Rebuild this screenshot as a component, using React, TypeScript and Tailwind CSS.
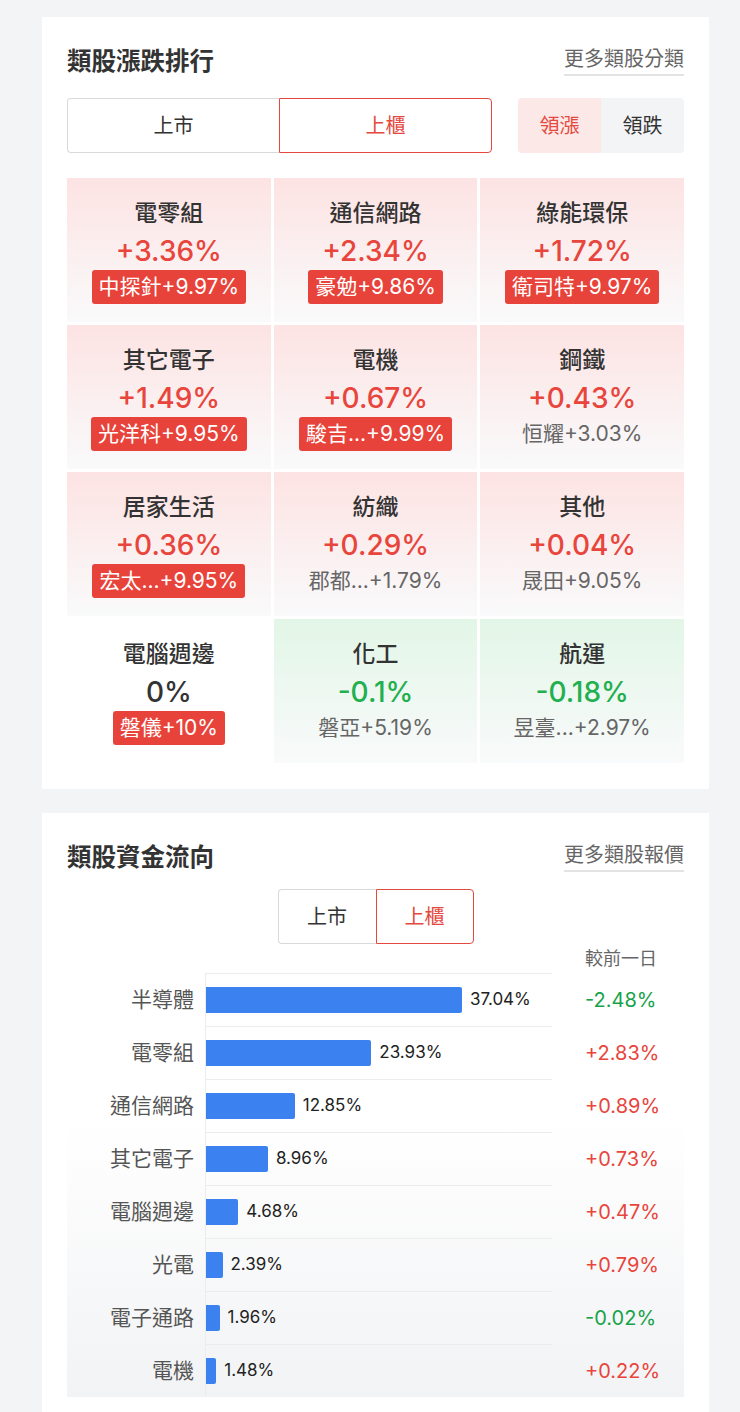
import React from "react";

type Sector = {
  name: string;
  change: string;
  dir: "up" | "down" | "flat";
  stock: string;
  limit: boolean;
};

const sectors: Sector[] = [
  { name: "電零組", change: "+3.36%", dir: "up", stock: "中探針+9.97%", limit: true },
  { name: "通信網路", change: "+2.34%", dir: "up", stock: "豪勉+9.86%", limit: true },
  { name: "綠能環保", change: "+1.72%", dir: "up", stock: "衛司特+9.97%", limit: true },
  { name: "其它電子", change: "+1.49%", dir: "up", stock: "光洋科+9.95%", limit: true },
  { name: "電機", change: "+0.67%", dir: "up", stock: "駿吉...+9.99%", limit: true },
  { name: "鋼鐵", change: "+0.43%", dir: "up", stock: "恒耀+3.03%", limit: false },
  { name: "居家生活", change: "+0.36%", dir: "up", stock: "宏太...+9.95%", limit: true },
  { name: "紡織", change: "+0.29%", dir: "up", stock: "郡都...+1.79%", limit: false },
  { name: "其他", change: "+0.04%", dir: "up", stock: "晟田+9.05%", limit: false },
  { name: "電腦週邊", change: "0%", dir: "flat", stock: "磐儀+10%", limit: true },
  { name: "化工", change: "-0.1%", dir: "down", stock: "磐亞+5.19%", limit: false },
  { name: "航運", change: "-0.18%", dir: "down", stock: "昱臺...+2.97%", limit: false },
];

const flows = [
  { name: "半導體", share: 37.04, diff: "-2.48%" },
  { name: "電零組", share: 23.93, diff: "+2.83%" },
  { name: "通信網路", share: 12.85, diff: "+0.89%" },
  { name: "其它電子", share: 8.96, diff: "+0.73%" },
  { name: "電腦週邊", share: 4.68, diff: "+0.47%" },
  { name: "光電", share: 2.39, diff: "+0.79%" },
  { name: "電子通路", share: 1.96, diff: "-0.02%" },
  { name: "電機", share: 1.48, diff: "+0.22%" },
];

function CardHeader({ title, link }: { title: string; link: string }) {
  return (
    <div className="flex items-center justify-between">
      <h2 className="text-[24.5px] leading-[30px] font-bold text-[#333]">{title}</h2>
      <a className="text-[20px] leading-[26px] text-[#666] border-b-2 border-[#e3e3e3] pb-[2px]">{link}</a>
    </div>
  );
}

function SectorCell({ s }: { s: Sector }) {
  const bg =
    s.dir === "up"
      ? "bg-gradient-to-b from-[#fde3e3] to-[#f9fafb]"
      : s.dir === "down"
        ? "bg-gradient-to-b from-[#e2f6e7] to-[#f9fafb]"
        : "bg-white";
  const color =
    s.dir === "up" ? "text-[#e8453c]" : s.dir === "down" ? "text-[#22b04f]" : "text-[#333]";
  return (
    <div className={`h-[144px] flex flex-col items-center pt-[18px] ${bg}`}>
      <div className="text-[23px] leading-[34px] text-[#333] font-medium">{s.name}</div>
      <div className={`mt-[6px] text-[28px] leading-[30px] font-medium ${color}`}>{s.change}</div>
      <div className="mt-[4px] h-[34px] flex items-center">
        {s.limit ? (
          <span className="bg-[#e8433a] text-white text-[21px] leading-[34px] px-[7px] rounded-[3px]">
            {s.stock}
          </span>
        ) : (
          <span className="text-[#666] text-[21px] leading-[34px]">{s.stock}</span>
        )}
      </div>
    </div>
  );
}

export default function App() {
  return (
    <main
      className="min-h-screen bg-[#f3f4f6] pt-[17px] pb-8"
      style={{ fontFamily: 'Inter, "Noto Sans CJK TC", "Noto Sans", sans-serif' }}
    >
      <section className="ml-[42px] w-[667px] bg-white px-[25px] pt-[29px] pb-[26px]">
        <CardHeader title="類股漲跌排行" link="更多類股分類" />

        <div className="mt-[22px] flex gap-[26px]">
          <div className="flex flex-1 h-[55px]">
            <button className="flex-1 border border-[#d9d9d9] border-r-0 rounded-l-[4px] text-[20px] text-[#333] bg-white">
              上市
            </button>
            <button className="flex-1 border border-[#e5483e] rounded-r-[4px] text-[20px] text-[#e5483e] bg-white">
              上櫃
            </button>
          </div>
          <div className="flex w-[166px] h-[55px] rounded-[4px] overflow-hidden">
            <button className="flex-1 bg-[#fde8e8] text-[20px] text-[#e5483e]">領漲</button>
            <button className="flex-1 bg-[#f3f4f6] text-[20px] text-[#333]">領跌</button>
          </div>
        </div>

        <div className="mt-[25px] grid grid-cols-3 gap-[3px]">
          {sectors.map((s) => (
            <SectorCell key={s.name} s={s} />
          ))}
        </div>
      </section>

      <section className="mt-[24px] ml-[42px] w-[667px] bg-white px-[25px] pt-[29px] pb-[40px]">
        <CardHeader title="類股資金流向" link="更多類股報價" />

        <div className="bg-gradient-to-b from-white from-45% to-[#f2f3f5]">
          <div className="mt-[17px] flex justify-center">
            <div className="flex h-[55px]">
              <button className="w-[98px] border border-[#d9d9d9] border-r-0 rounded-l-[4px] text-[20px] text-[#333] bg-white">
                上市
              </button>
              <button className="w-[98px] border border-[#e5483e] rounded-r-[4px] text-[20px] text-[#e5483e] bg-white">
                上櫃
              </button>
            </div>
          </div>

          <div className="h-[29px] flex items-center pl-[518px] text-[18px] text-[#666]">較前一日</div>

          <div>
            {flows.map((f) => {
              const up = f.diff.startsWith("+");
              return (
                <div key={f.name} className="grid grid-cols-[127px_347px_1fr] gap-x-[11px] h-[53px]">
                  <div className="flex items-center justify-end text-[21px] text-[#555]">{f.name}</div>
                  <div className="flex items-center border-l border-t border-[#ececec]">
                    <div
                      className="h-[26px] bg-[#3b82f0] rounded-r-[2px]"
                      style={{ width: `${f.share * 6.91}px` }}
                    />
                    <span className="ml-[8px] text-[17px] text-[#222]">{f.share.toFixed(2)}%</span>
                  </div>
                  <div
                    className={`flex items-center pl-[22px] text-[20px] ${up ? "text-[#e8453c]" : "text-[#16a34a]"}`}
                  >
                    {f.diff}
                  </div>
                </div>
              );
            })}
          </div>
        </div>
      </section>
    </main>
  );
}
